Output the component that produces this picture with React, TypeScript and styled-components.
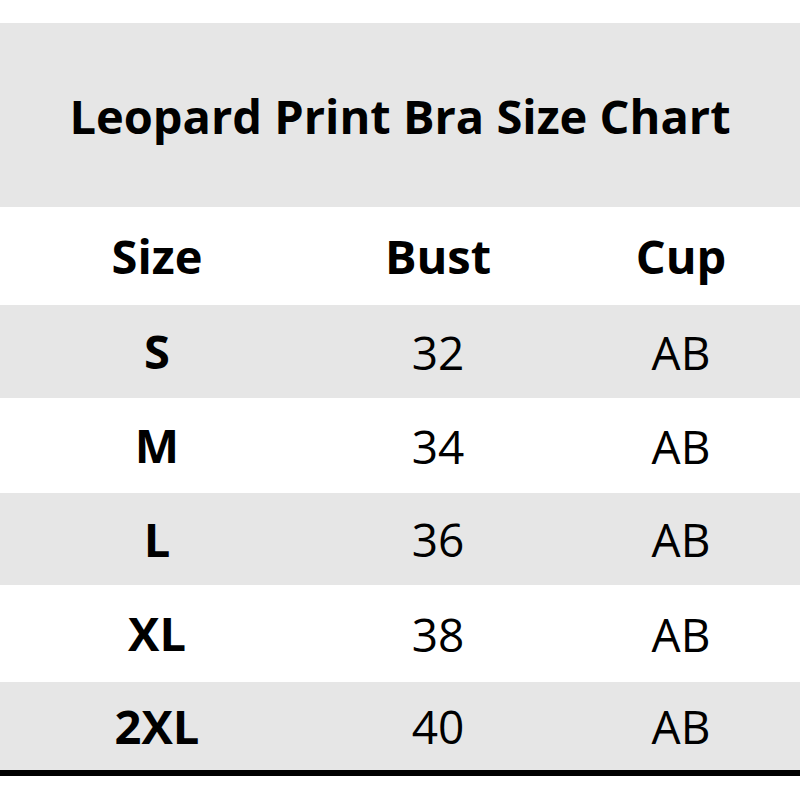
import React, { ReactElement } from 'react'
import styled, { createGlobalStyle } from 'styled-components'

const GlobalStyle = createGlobalStyle`
  html, body {
    margin: 0;
    padding: 0;
    background: #ffffff;
  }
  body {
    font-family: 'Open Sans', 'Liberation Sans', sans-serif;
    color: #000000;
  }
`

type Row = {
  size: string
  bust: string
  cup: string
  height: number
}

const ROWS: Row[] = [
  { size: 'S', bust: '32', cup: 'AB', height: 93 },
  { size: 'M', bust: '34', cup: 'AB', height: 95 },
  { size: 'L', bust: '36', cup: 'AB', height: 92 },
  { size: 'XL', bust: '38', cup: 'AB', height: 97 },
  { size: '2XL', bust: '40', cup: 'AB', height: 88 },
]

const App = (): ReactElement => {
  return (
    <>
      <GlobalStyle />
      <Page>
        <TitleBand>
          <Title>Leopard Print Bra Size Chart</Title>
        </TitleBand>
        <TableRow shaded={false} height={98}>
          <Cell bold>Size</Cell>
          <Cell bold>Bust</Cell>
          <Cell bold>Cup</Cell>
        </TableRow>
        {ROWS.map((row, i) => (
          <TableRow key={row.size} shaded={i % 2 === 0} height={row.height}>
            <Cell bold>{row.size}</Cell>
            <Cell>{row.bust}</Cell>
            <Cell>{row.cup}</Cell>
          </TableRow>
        ))}
        <BottomRule />
      </Page>
    </>
  )
}

export default App

const Page = styled.div`
  width: 800px;
  height: 800px;
  padding-top: 23px;
  box-sizing: border-box;
  display: flex;
  flex-direction: column;
  background: #ffffff;
`

const TitleBand = styled.div`
  height: 184px;
  background: #e6e6e6;
  display: flex;
  align-items: center;
  justify-content: center;
`

const Title = styled.h1`
  margin: 0;
  font-size: 47px;
  font-weight: 700;
  padding-top: 2px;
`

type TableRowProps = {
  shaded: boolean
  height: number
}

const TableRow = styled.div<TableRowProps>`
  display: grid;
  grid-template-columns: 314px 248px 238px;
  height: ${(props) => props.height}px;
  background: ${(props) => (props.shaded ? '#e6e6e6' : '#ffffff')};
  align-items: center;
`

type CellProps = {
  bold?: boolean
}

const Cell = styled.div<CellProps>`
  text-align: center;
  font-size: ${(props) => (props.bold ? 47 : 46)}px;
  font-weight: ${(props) => (props.bold ? 700 : 400)};
  line-height: 1;
`

const BottomRule = styled.div`
  height: 6px;
  background: #000000;
`
